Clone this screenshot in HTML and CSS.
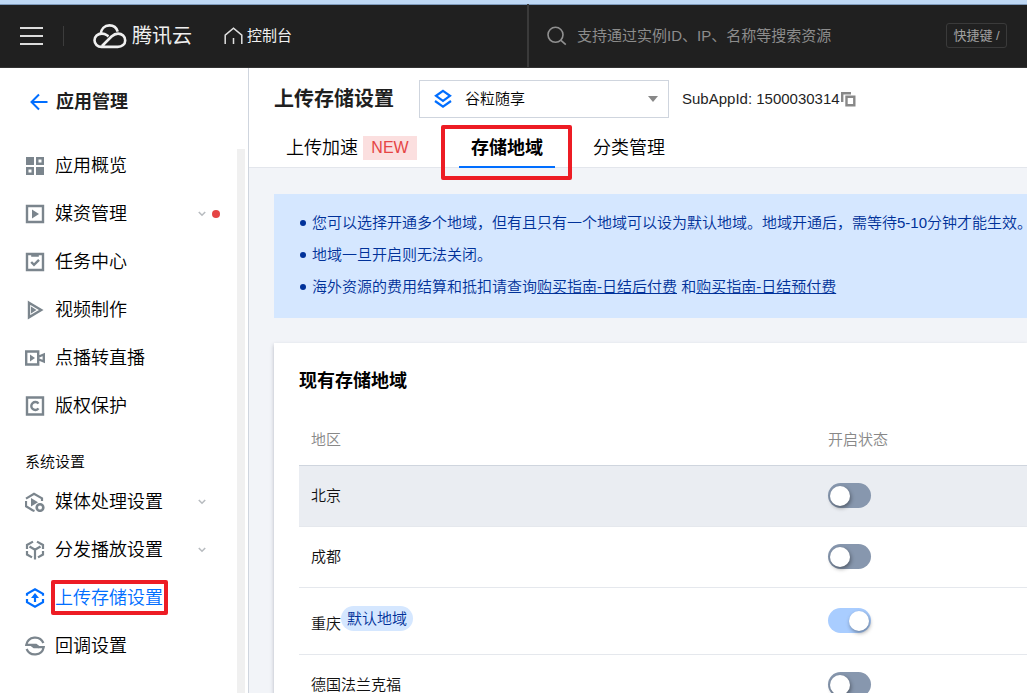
FILE: index.html
```html
<!DOCTYPE html>
<html lang="zh-CN">
<head>
<meta charset="utf-8">
<title>上传存储设置</title>
<link rel="stylesheet" href="styles.css">
</head>
<body>
<div class="page">
  <header class="topbar">
    <button class="menu-btn" aria-label="菜单">
      <svg width="24" height="20" viewBox="0 0 24 20"><path d="M0 2h23M0 10h23M0 18h23" stroke="#dcdcdc" stroke-width="2"/></svg>
    </button>
    <a class="brand" href="#">
      <svg width="34" height="26" viewBox="0 0 34 26" fill="none" stroke="#f0f0f0" stroke-width="2.6" stroke-linecap="butt">
        <path d="M7.5 11.5C8 6 11.6 2.4 16.4 2.4c4 0 7.200 2.500 8.300 6.200"/>
        <path d="M15.500 13.300l-1.500-1c-1.500-1.100-3.200-1.700-5.200-1.700-4.100 0-7.300 2.900-7.300 6.700s3 6.600 7 6.600h16.200c4.300 0 7.500-2.700 7.500-6.500 0-3.900-3.100-6.800-7.200-6.800-2.700 0-4.400 1-6.500 2.900L9 23"/>
      </svg>
      <span>腾讯云</span>
    </a>
    <a class="console" href="#">
      <svg width="19" height="18" viewBox="0 0 19 18" fill="none" stroke="#e0e0e0" stroke-width="1.500"><path d="M1.200 17V8.200L9.500 1.200l8.300 7V17M9.500 11v6"/></svg>
      <span>控制台</span>
    </a>
    <div class="search">
      <svg width="20" height="20" viewBox="0 0 20 20" fill="none" stroke="#909090" stroke-width="1.600"><circle cx="8.500" cy="8.800" r="7.500"/><path d="M14 14.300l4.800 4.400"/></svg>
      <input class="search-input" type="text" aria-label="搜索" placeholder="支持通过实例ID、IP、名称等搜索资源">
      <button class="shortcut">快捷键 /</button>
    </div>
  </header>

  <div class="body">
    <nav class="sidebar">
      <a class="back" href="#">
        <svg width="18" height="18" viewBox="0 0 18 18" fill="none" stroke="#006eff" stroke-width="2"><path d="M17.500 9H2M9 1.500L1.500 9 9 16.500"/></svg>
        <span>应用管理</span>
      </a>
      <div class="nav-scroll">
        <ul class="nav-list">
          <li><a class="nav-item" href="#">
            <svg class="nav-icon" viewBox="0 0 20 20"><path fill="#7b858d" fill-rule="evenodd" d="M1 1h8v8H1zM11 1h8v8h-8zM13.500 3.500v3h3v-3zM1 11h8v8H1zM3.500 13.500v3h3v-3zM11 11h8v8h-8z"/></svg>
            <span>应用概览</span></a></li>
          <li><a class="nav-item" href="#">
            <svg class="nav-icon" viewBox="0 0 20 20"><path fill="none" stroke="#7b858d" stroke-width="2.400" d="M2 2h16v16H2z"/><path fill="#7b858d" d="M7 5.500l7 4.500-7 4.500z"/></svg>
            <span>媒资管理</span>
            <svg class="chevron" viewBox="0 0 8 8"><path d="M.8 2L4 5.200 7.200 2"/></svg><i class="dot"></i></a></li>
          <li><a class="nav-item" href="#">
            <svg class="nav-icon" viewBox="0 0 20 20" fill="none" stroke="#7b858d" stroke-width="2.400"><path d="M2 2h16v16H2zM6.200 3.500h7.600M6.200 10l2.800 2.800 5-5"/></svg>
            <span>任务中心</span></a></li>
          <li><a class="nav-item" href="#">
            <svg class="nav-icon" viewBox="0 0 20 20"><path fill="none" stroke="#7b858d" stroke-width="2.400" d="M4 2.700L16.200 10 4 17.300z"/><path fill="#7b858d" d="M6 6.500l5.500 3.500L6 13.500z"/></svg>
            <span>视频制作</span></a></li>
          <li><a class="nav-item" href="#">
            <svg class="nav-icon" viewBox="0 0 20 20"><path fill="none" stroke="#7b858d" stroke-width="2.400" d="M1.200 3.500h12v13h-12zM14 8.500l4.800-2v7l-4.800-2"/><path fill="#7b858d" d="M5 6.500l5 3.500-5 3.500z"/></svg>
            <span>点播转直播</span></a></li>
          <li><a class="nav-item" href="#">
            <svg class="nav-icon" viewBox="0 0 20 20" fill="none" stroke="#7b858d" stroke-width="2.400"><path d="M2 1.500h16v17H2z"/><path d="M13.500 7.600A4 4 0 1 0 13.500 12.400"/></svg>
            <span>版权保护</span></a></li>
        </ul>
        <h2 class="nav-title">系统设置</h2>
        <ul class="nav-list">
          <li><a class="nav-item" href="#">
            <svg class="nav-icon" viewBox="0 0 20 20" fill="none" stroke="#7b858d" stroke-width="2.200"><path d="M1 6.600L9 1.700l8 4.600V9M1 9v5.200l6.500 4 2 .8"/><path fill="#7b858d" stroke="none" d="M6 6l7 4.300L6 14.500z"/><circle cx="15" cy="15.500" r="3.300" stroke-width="2.600"/></svg>
            <span>媒体处理设置</span>
            <svg class="chevron" viewBox="0 0 8 8"><path d="M.8 2L4 5.200 7.200 2"/></svg></a></li>
          <li><a class="nav-item" href="#">
            <svg class="nav-icon" viewBox="0 0 20 20" fill="none" stroke="#7b858d" stroke-width="2.200"><path d="M8 1.600L2 5v4M12 1.600L18 5v4M2 11v3.500L7 17.400M18 11v3.500l-5 2.900M4.500 6.500L10 9.800l5.500-3.300M10 10v9.500"/></svg>
            <span>分发播放设置</span>
            <svg class="chevron" viewBox="0 0 8 8"><path d="M.8 2L4 5.200 7.200 2"/></svg></a></li>
          <li><a class="nav-item active" href="#">
            <svg class="nav-icon" viewBox="0 0 20 20" fill="none" stroke="#006eff" stroke-width="2.200"><path d="M2 7.700V5.800L10 1.300l8 4.500v1.900M2 11v3.200l8 4.500 8-4.500V11"/><path d="M10 14V8"/><path fill="#006eff" stroke="none" d="M10 5l4 5H6z"/></svg>
            <span class="marked marked-nav">上传存储设置</span></a></li>
          <li><a class="nav-item" href="#">
            <svg class="nav-icon" viewBox="0 0 20 20" fill="none" stroke="#7b858d" stroke-width="2.200"><path d="M18.400 7A9 9 0 0 0 1.300 8.800H11l3 2.400h4.700A9 9 0 0 1 1.600 13"/><path d="M6 8.800l3 2.400h5"/></svg>
            <span>回调设置</span></a></li>
        </ul>
      </div>
    </nav>

    <main class="main">
      <div class="main-head">
        <div class="title-row">
          <h1 class="title">上传存储设置</h1>
          <div class="app-select">
            <svg width="18" height="20" viewBox="0 0 18 20" fill="none" stroke="#006eff" stroke-width="2.200"><path d="M9 1.800l7 5-7 5-7-5zM1 12l8 5.700 8-5.700"/></svg>
            <select class="app-input" aria-label="应用"><option>谷粒随享</option></select>
            <svg width="10" height="6" viewBox="0 0 10 6"><path fill="#888" d="M0 0h10L5 6z"/></svg>
          </div>
          <div class="appid"><span>SubAppId: 1500030314</span>
            <button class="copy" aria-label="复制"><svg width="15" height="16" viewBox="0 0 15 16" fill="none" stroke="#888" stroke-width="2.400"><path d="M1.200 11V2.200H10M5.500 5.700h7.800v8.600H5.500z"/></svg></button>
          </div>
        </div>
        <div class="tabs" role="tablist">
          <button class="tab" role="tab">上传加速<span class="new">NEW</span></button>
          <button class="tab selected marked marked-tab" role="tab" aria-selected="true">存储地域</button>
          <button class="tab" role="tab">分类管理</button>
        </div>
      </div>

      <div class="content">
        <ul class="notice">
          <li>您可以选择开通多个地域，但有且只有一个地域可以设为默认地域。地域开通后，需等待5-10分钟才能生效。</li>
          <li>地域一旦开启则无法关闭。</li>
          <li>海外资源的费用结算和抵扣请查询<a href="#">购买指南-日结后付费</a> 和<a href="#">购买指南-日结预付费</a></li>
        </ul>
        <section class="card">
          <h2 class="card-title">现有存储地域</h2>
          <table class="regions">
            <thead><tr><th class="region-col">地区</th><th>开启状态</th></tr></thead>
            <tbody>
              <tr class="hover"><td>北京</td><td><input class="switch" type="checkbox" aria-label="北京"></td></tr>
              <tr><td>成都</td><td><input class="switch" type="checkbox" aria-label="成都"></td></tr>
              <tr class="default"><td><div class="region">重庆<span class="badge">默认地域</span></div></td><td><input class="switch" type="checkbox" aria-label="重庆" checked disabled></td></tr>
              <tr><td>德国法兰克福</td><td><input class="switch" type="checkbox" aria-label="德国法兰克福"></td></tr>
            </tbody>
          </table>
        </section>
      </div>
    </main>
  </div>
</div>
</body>
</html>
```
FILE: styles.css
```css
* { box-sizing: border-box; }
body {
  margin: 0;
  color: #000;
  background: #f2f4f8;
  font: 350 15px/24px "Liberation Sans", "Noto Sans CJK SC", sans-serif;
}
button, input, select { font: inherit; color: inherit; }
button { padding: 0; border: 0; background: none; cursor: pointer; }
a { color: inherit; text-decoration: none; }
ul { margin: 0; padding: 0; list-style: none; }
h1, h2 { margin: 0; }
svg { flex: none; display: block; }

.page { display: flex; flex-direction: column; height: 100vh; overflow: hidden; }

/* top bar */
.topbar {
  flex: none;
  display: flex;
  align-items: center;
  height: 68px;
  padding-left: 20px;
  color: #f0f0f0;
  background: #202020;
  border-top: 4px solid #bfd8f4;
  border-bottom: 1px solid #333;
  box-shadow: inset 0 1px #7f9bbd;
}
.menu-btn { padding-right: 19px; border-right: 1px solid #3c3c3c; }
.brand { display: flex; align-items: center; gap: 5px; margin-left: 29px; font-size: 20px; font-weight: 400; }
.console { display: flex; align-items: center; gap: 4px; margin-left: 32px; font-weight: 400; white-space: nowrap; }
.search {
  flex: 1;
  align-self: stretch;
  display: flex;
  align-items: center;
  gap: 10px;
  max-width: 500px;
  margin-left: auto;
  padding: 0 20px 0 18px;
  border-left: 2px solid #3a3a3a;
  color: #909090;
}
.search-input { flex: 1; min-width: 0; padding: 0; border: 0; outline: 0; background: none; font-weight: 400; }
.search-input::placeholder { color: #8c8c8c; }
.shortcut {
  width: 61px;
  height: 25px;
  border: 1px solid #3a3a3a;
  border-radius: 3px;
  color: #a0a0a0;
  font-size: 13px;
  font-weight: 400;
  line-height: 20px;
  white-space: nowrap;
}

/* sidebar */
.body { flex: 1; display: flex; min-height: 0; }
.sidebar {
  flex: none;
  display: flex;
  flex-direction: column;
  width: 249px;
  background: #fff;
  border-right: 1px solid #cfd5de;
}
.back { display: flex; align-items: center; gap: 8px; padding: 22px 30px 35px; font-size: 18px; font-weight: 700; color: #1f1f1f; }
.nav-scroll {
  flex: 1;
  display: flow-root;
  min-height: 0;
  margin-right: 3px;
  border-right: 8px solid #f0f0f0;
}
.nav-list:first-child { margin-top: -7px; }
.nav-item { display: flex; align-items: center; gap: 10px; height: 48px; padding-left: 25px; font-size: 18px; }
.nav-icon { width: 20px; height: 20px; }
.nav-item.active { color: #006eff; }
.chevron { width: 8px; height: 8px; margin-left: auto; margin-right: 31px; fill: none; stroke: #b8bcc0; stroke-width: 1.6; }
.chevron:has(+ .dot) { margin-right: 0; }
.dot { width: 8px; height: 8px; margin: 0 17px 0 -4px; border-radius: 50%; background: #e54545; }
.nav-title { padding: 20px 25px 4px; font-size: 15px; font-weight: 350; }

/* red annotation frames drawn over the content */
.marked { position: relative; }
.marked::after { content: ""; position: absolute; border: 4px solid #ed1c24; border-radius: 2px; pointer-events: none; }
.marked-nav::after { inset: -6px -5px -5px -4px; }
.marked-tab::after { inset: -3px -17px -14px -18px; z-index: 1; }

/* page head */
.main { flex: 1; min-width: 0; overflow: hidden; }
.main-head { background: #fff; border-bottom: 1px solid #e3e6ec; }
.title-row { display: flex; align-items: center; padding: 12px 25px 10px; }
.title { font-size: 20px; font-weight: 700; color: #1f1f1f; white-space: nowrap; }
.app-select {
  display: flex;
  align-items: center;
  width: 250px;
  height: 38px;
  margin: 0 13px 0 25px;
  padding: 0 10px 0 14px;
  border: 1px solid #cfd5de;
}
.app-input { flex: 1; appearance: none; padding: 0 0 0 13px; border: 0; outline: 0; background: none; }
.appid { display: flex; align-items: center; gap: 1px; white-space: nowrap; font-weight: 400; color: #1f1f1f; }
.tabs { display: flex; gap: 26px; margin-bottom: -1px; padding-left: 25px; }
.tab { display: flex; align-items: center; gap: 5px; height: 40px; padding: 0 12px; font-size: 18px; white-space: nowrap; }
.tab.selected { font-weight: 700; border-bottom: 2px solid #006eff; padding-top: 2px; }
.new { width: 54px; margin-right: 4px; line-height: 24px; font-size: 16px; font-weight: 400; text-align: center; color: #e54545; background: #fbdfdf; }

/* content */
.content { padding: 26px 0 0 25px; }
.notice { padding: 13px 0 15px 25px; line-height: 32px; color: #003199; background: #d5e7ff; }
.notice li { display: flex; align-items: center; white-space: pre; }
.notice li::before { content: ""; flex: none; width: 6px; height: 6px; margin: 0 6px 0 1px; border-radius: 50%; background: #003199; }
.notice a { text-decoration: underline; }
.card { margin-top: 25px; padding: 26px 0 0 25px; background: #fff; box-shadow: 0 2px 4px rgba(54, 58, 80, .32); }
.card-title { font-size: 18px; font-weight: 700; }
.regions { width: 100%; margin-top: 23px; border-collapse: collapse; }
.regions th, .regions td { padding: 0 0 0 12px; text-align: left; }
.regions th { height: 49px; font-weight: 350; color: #888; border-bottom: 1px solid #cfd5de; }
.regions td { height: 61px; border-bottom: 1px solid #e5e8ed; color: #111; }
.region-col { width: 71%; }
.regions .hover { background: #eaedf2; }
.regions .default td { height: 67px; }
.region { display: flex; align-items: flex-end; height: 30px; }
.badge { align-self: flex-start; padding: 0 6px; border-radius: 13px; line-height: 25px; color: #003199; background: #d5e7ff; }
.switch {
  appearance: none;
  display: flex;
  align-items: center;
  width: 43px;
  height: 25px;
  margin: 0;
  padding: 0 2px;
  border-radius: 13px;
  background: #8797ae;
}
.switch::before { content: ""; width: 20px; height: 20px; border-radius: 50%; background: #fff; box-shadow: 1px 2px 4px rgba(0, 0, 0, .4); }
.switch:checked { justify-content: flex-end; background: #a9cdff; }
```
